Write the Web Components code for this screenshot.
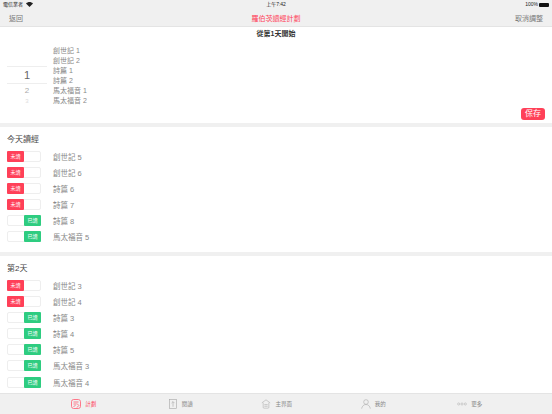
<!DOCTYPE html>
<html lang="zh-Hant">
<head>
<meta charset="utf-8">
<title>羅伯茨讀經計劃</title>
<style>
  html, body { margin: 0; padding: 0; }
  body {
    width: 552px;
    height: 414px;
    overflow: hidden;
    display: flex;
    flex-direction: column;
    background: #fff;
    font-family: "Liberation Sans", "Noto Sans CJK TC", sans-serif;
  }
  main { flex: 1; min-height: 0; overflow: hidden; }
</style>
</head>
<body>
  <status-bar></status-bar>
  <nav-bar></nav-bar>
  <main>
    <start-picker></start-picker>
    <reading-section title="今天讀經">
      <reading-row>創世記 5</reading-row>
      <reading-row>創世記 6</reading-row>
      <reading-row>詩篇 6</reading-row>
      <reading-row>詩篇 7</reading-row>
      <reading-row done>詩篇 8</reading-row>
      <reading-row done>馬太福音 5</reading-row>
    </reading-section>
    <reading-section title="第2天">
      <reading-row>創世記 3</reading-row>
      <reading-row>創世記 4</reading-row>
      <reading-row done>詩篇 3</reading-row>
      <reading-row done>詩篇 4</reading-row>
      <reading-row done>詩篇 5</reading-row>
      <reading-row done>馬太福音 3</reading-row>
      <reading-row done>馬太福音 4</reading-row>
    </reading-section>
  </main>
  <tab-bar>
    <tab-item active label="計劃">
      <svg viewBox="1 1 10 10" fill="none" stroke="currentColor" stroke-width=".9"><rect x="1.500" y="1.500" width="9" height="9" rx="2.200"/><path d="M3.500 4h5M3.500 6h3M3.500 8.500l2-1M7 5.500l1.800 2L7 9.500"/></svg>
    </tab-item>
    <tab-item label="閱讀">
      <svg viewBox="1 .5 10 11" fill="none" stroke="currentColor" stroke-width=".7"><rect x="2.200" y=".9" width="7.600" height="10.200"/><path d="M6 9V3.400M4.400 5 6 3.400 7.600 5"/></svg>
    </tab-item>
    <tab-item label="主界面">
      <svg viewBox="0 1 12 11" fill="none" stroke="currentColor" stroke-width=".7"><path d="M1 5.200 6 1.500l5 3.700M2.600 5v5.500a1 1 0 0 0 1 1h4.800a1 1 0 0 0 1-1V5M4 7.200h4M4 9.200h4"/></svg>
    </tab-item>
    <tab-item label="我的">
      <svg viewBox="0 0 12 12" fill="none" stroke="currentColor" stroke-width=".7"><circle cx="6" cy="3.600" r="2.800"/><path d="M.8 11.600c.4-3 2.500-5 5.200-5s4.800 2 5.200 5"/></svg>
    </tab-item>
    <tab-item label="更多">
      <svg viewBox="0 0 12 12" fill="none" stroke="currentColor" stroke-width=".6"><circle cx="2" cy="6" r="1.300"/><circle cx="6" cy="6" r="1.300"/><circle cx="10" cy="6" r="1.300"/></svg>
    </tab-item>
  </tab-bar>

<script>
class StatusBar extends HTMLElement {
  connectedCallback() {
    this.attachShadow({mode: 'open'}).innerHTML = `
      <style>
        :host {
          display: grid;
          grid-template-columns: 1fr auto 1fr;
          align-items: center;
          height: 9px;
          padding: 0 3px;
          background: #f0f0f0;
          color: #222;
          font-size: 5px;
          line-height: 9px;
        }
        .left { display: flex; align-items: center; gap: 3px; }
        .right { display: flex; align-items: center; justify-content: flex-end; gap: 1px; }
        .battery { width: 10px; height: 4px; background: #111; border-radius: 1px; }
      </style>
      <div class="left">
        <span>電信業者</span>
        <svg width="7" height="5" viewBox="0 0 7 5"><path d="M0 1.500C2-.5 5-.5 7 1.500L3.500 5z" fill="#222"/></svg>
      </div>
      <div>上午7:42</div>
      <div class="right"><span>100%</span><span class="battery"></span></div>
    `;
  }
}

class NavBar extends HTMLElement {
  connectedCallback() {
    this.attachShadow({mode: 'open'}).innerHTML = `
      <style>
        :host {
          display: grid;
          grid-template-columns: 1fr auto 1fr;
          align-items: center;
          height: 17px;
          padding: 0 9px;
          background: #f0f0f0;
          border-bottom: 1px solid #e4e4e4;
          color: #777;
          font-size: 7px;
        }
        .title { color: #ff4058; }
        .action { justify-self: end; }
      </style>
      <div>返回</div>
      <div class="title">羅伯茨讀經計劃</div>
      <div class="action">取消調整</div>
    `;
  }
}

class StartPicker extends HTMLElement {
  connectedCallback() {
    const books = ['創世記 1', '創世記 2', '詩篇 1', '詩篇 2', '馬太福音 1', '馬太福音 2'];
    this.attachShadow({mode: 'open'}).innerHTML = `
      <style>
        :host {
          display: flex;
          flex-direction: column;
          height: 96px;
          border-bottom: 4px solid #f0f0f0;
          color: #888;
          font-size: 7px;
        }
        .heading {
          margin-top: 2px;
          text-align: center;
          color: #333;
          font-weight: bold;
          line-height: 10px;
        }
        .body { display: flex; gap: 6px; padding: 5.500px 7px 0; }
        .wheel { width: 40px; padding-top: 21px; text-align: center; }
        .current {
          height: 16px;
          line-height: 17px;
          font-size: 11px;
          color: #666;
          border: solid #eee;
          border-width: 1px 0;
        }
        .next { margin-top: 1px; line-height: 11px; font-size: 8px; color: #aaa; }
        .after { line-height: 10px; font-size: 6px; color: #ddd; }
        .books { line-height: 10.150px; padding-top: 1px; }
        .save {
          align-self: flex-end;
          margin: auto 7px 3px 0;
          width: 24px;
          height: 12px;
          border-radius: 3px;
          background: #ff4058;
          color: #fff;
          font-size: 8px;
          text-align: center;
          line-height: 12px;
        }
      </style>
      <div class="heading">從第1天開始</div>
      <div class="body">
        <div class="wheel">
          <div class="current">1</div>
          <div class="next">2</div>
          <div class="after">3</div>
        </div>
        <div class="books">${books.map(b => `<div>${b}</div>`).join('')}</div>
      </div>
      <div class="save">保存</div>
    `;
  }
}

class ReadingSection extends HTMLElement {
  connectedCallback() {
    this.attachShadow({mode: 'open'}).innerHTML = `
      <style>
        :host {
          display: block;
          padding: 7px 7px 9.500px;
          border-bottom: 4px solid #f0f0f0;
        }
        .title { color: #444; font-size: 8px; line-height: 11px; margin-bottom: 6px; }
        .rows { display: grid; row-gap: 5.100px; }
      </style>
      <div class="title">${this.getAttribute('title')}</div>
      <div class="rows"><slot></slot></div>
    `;
  }
}

class ReadingRow extends HTMLElement {
  connectedCallback() {
    const done = this.hasAttribute('done');
    this.attachShadow({mode: 'open'}).innerHTML = `
      <style>
        :host {
          display: flex;
          align-items: center;
          gap: 12px;
          height: 11px;
          color: #888;
          font-size: 7.500px;
        }
        .toggle {
          display: flex;
          justify-content: ${done ? 'flex-end' : 'flex-start'};
          box-sizing: border-box;
          width: 34px;
          height: 11px;
          border: 1px solid #eee;
          border-radius: 2px;
        }
        .state {
          width: 17px;
          margin: -1px;
          height: 11px;
          border-radius: 1px;
          background: ${done ? '#2ecc80' : '#ff4058'};
          color: #fff;
          font-size: 5px;
          line-height: 11px;
          text-align: center;
        }
      </style>
      <div class="toggle"><div class="state">${done ? '已讀' : '未讀'}</div></div>
      <div><slot></slot></div>
    `;
  }
}

class TabBar extends HTMLElement {
  connectedCallback() {
    this.attachShadow({mode: 'open'}).innerHTML = `
      <style>
        :host {
          display: grid;
          grid-template-columns: repeat(5, 96.500px);
          height: 20px;
          padding-left: 35.500px;
          background: #f0f0f0;
          border-top: 1px solid #e4e4e4;
        }
      </style>
      <slot></slot>
    `;
  }
}

class TabItem extends HTMLElement {
  connectedCallback() {
    this.attachShadow({mode: 'open'}).innerHTML = `
      <style>
        :host {
          display: flex;
          align-items: center;
          justify-content: center;
          gap: 4px;
          color: ${this.hasAttribute('active') ? '#ff6a7e' : '#aaa'};
          font-size: 5.500px;
        }
        ::slotted(svg) { width: 10px; height: 10px; }
        span { color: ${this.hasAttribute('active') ? '#ff4058' : '#888'}; }
      </style>
      <slot></slot>
      <span>${this.getAttribute('label')}</span>
    `;
  }
}

customElements.define('status-bar', StatusBar);
customElements.define('nav-bar', NavBar);
customElements.define('start-picker', StartPicker);
customElements.define('reading-section', ReadingSection);
customElements.define('reading-row', ReadingRow);
customElements.define('tab-bar', TabBar);
customElements.define('tab-item', TabItem);
</script>
</body>
</html>
